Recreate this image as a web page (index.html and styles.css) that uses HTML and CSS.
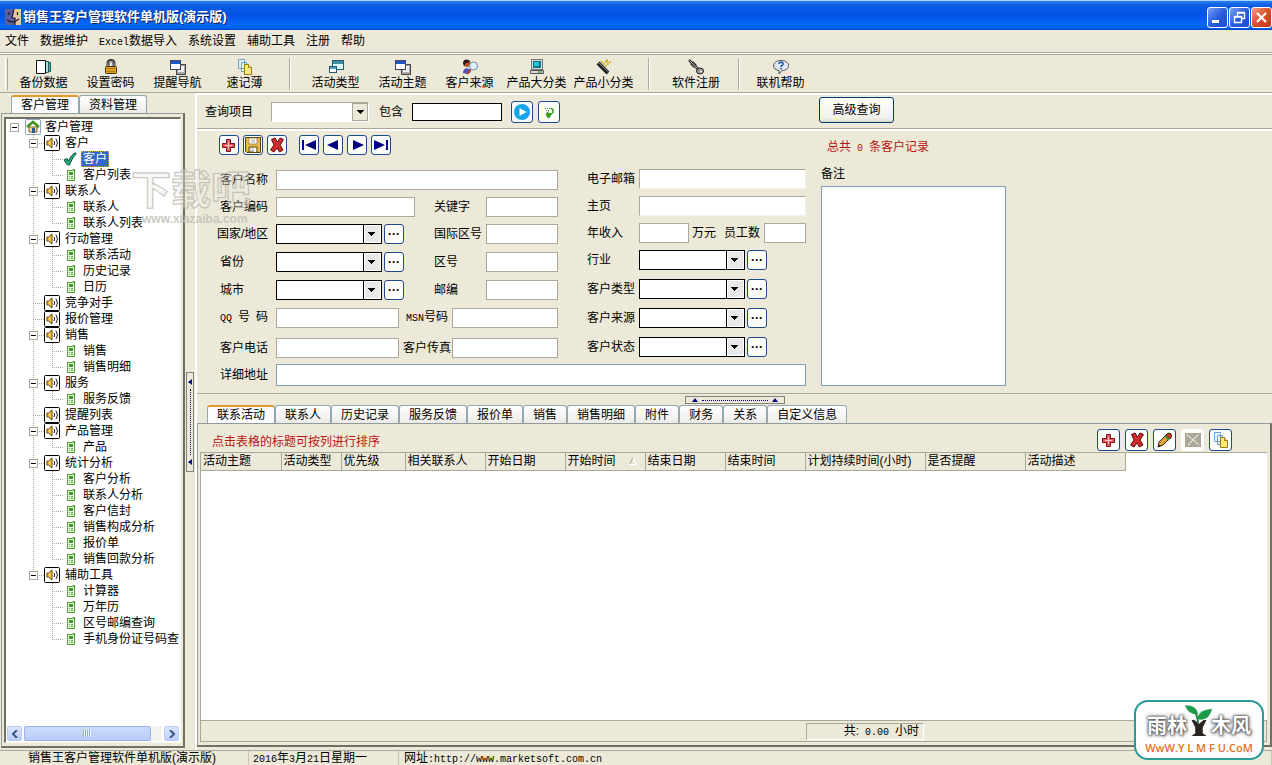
FILE: index.html
```html
<!DOCTYPE html>
<html lang="zh-CN">
<head>
    <meta charset="UTF-8">
    <meta name="viewport" content="width=device-width, initial-scale=1.0">
    <title>销售王客户管理软件单机版(演示版)</title>
    <link rel="stylesheet" href="styles.css">
</head>
<body>
    <!-- 图标定义 -->
    <svg class="defs" width="0" height="0" aria-hidden="true">
        <symbol id="i-backup" viewBox="0 0 16 16">
            <path d="M10.500 3.500h4v9h-4z" fill="#4fb5b0" stroke="#145a5a"/>
            <path d="M8.500 2.500h4v11h-4z" fill="#9fe5e0" stroke="#245a5a"/>
            <path d="M.5 1.500h9v13h-9z" fill="#fff" stroke="#111"/>
        </symbol>
        <symbol id="i-lock" viewBox="0 0 16 16">
            <path d="M5 8V4.500C5 .5 11 .5 11 4.500V8" fill="none" stroke="#333" stroke-width="3"/>
            <path d="M5 8V4.500C5 1.500 11 1.500 11 4.500V8" fill="none" stroke="#bbb"/>
            <rect x="2.500" y="7.500" width="11" height="7" rx="1" fill="#e0a020" stroke="#4a3000"/>
            <path d="M4 9.500h8M4 12.500h8" stroke="#b57a10"/>
        </symbol>
        <symbol id="i-windows" viewBox="0 0 16 16">
            <rect x="6.500" y="5.500" width="9" height="10" fill="#aaa" stroke="#444"/>
            <rect x="8" y="7" width="6" height="6" fill="#eee"/>
            <rect x=".5" y="1.500" width="10" height="9" fill="#fff" stroke="#445"/>
            <path d="M1 2h9v3H1z" fill="#1c56c8"/>
        </symbol>
        <symbol id="i-type" viewBox="0 0 16 16">
            <rect x="4.500" y="1.500" width="11" height="9" fill="#dff" stroke="#245a6c"/>
            <path d="M5 2h10v3H5z" fill="#3b8ca8"/>
            <rect x="1.500" y="7.500" width="7" height="6" fill="#fff" stroke="#245a6c"/>
            <path d="M2 8h6v2H2z" fill="#4ba3cb"/>
        </symbol>
        <symbol id="i-notes" viewBox="0 0 16 16">
            <path d="M1.500.5h6v9h-6zM4.500 3.500h5v9h-5z" fill="#e9f4ff" stroke="#6d9fc5"/>
            <path d="M7.500 5.500h4l3 3v7h-7z" fill="#ffe680" stroke="#9a7a14"/>
            <path d="M11.500 5.500v3h3" fill="#fff6c8" stroke="#9a7a14"/>
        </symbol>
        <symbol id="i-source" viewBox="0 0 16 16">
            <path d="M1 14c0-6 7-6 8-1l-3 2z" fill="#4a50c0"/>
            <circle cx="5" cy="4.500" r="3.500" fill="#b5562c"/>
            <path d="M1 4c0-5 7-4 7-1L4 4l-2 3z" fill="#2b1a14"/>
            <path d="m9 10-4 5" stroke="#c0392b" stroke-width="2"/>
            <circle cx="11.500" cy="7" r="4" fill="#dff3ff" stroke="#6a8ea8"/>
        </symbol>
        <symbol id="i-pc" viewBox="0 0 16 16">
            <rect x="2.500" y=".5" width="11" height="10" fill="#d8d8d8" stroke="#777"/>
            <path d="M4 2h8v7H4z" fill="#067a8a"/>
            <path d="M5 3h5v4H5z" fill="#27c4d4"/>
            <path d="M1.500 11.500h13v3h-13z" fill="#d8d8d8" stroke="#555"/>
            <path d="M9 13h4" stroke="#1b8a3a"/>
        </symbol>
        <symbol id="i-wand" viewBox="0 0 16 16">
            <path d="m2 4 10 10" stroke="#222" stroke-width="4"/>
            <path d="m2.500 3.500 10 9.500" stroke="#888"/>
            <path d="m5 2 3 3 3-4 1 4 3-3M9 7l3-1" fill="none" stroke="#c3a800" stroke-width="1.500" stroke-dasharray="2 1"/>
        </symbol>
        <symbol id="i-key" viewBox="0 0 16 16">
            <path d="m1 1 9 9M3 6l3-3M5 8l3-3" stroke="#333" stroke-width="2.500"/>
            <path d="m1.500 1.500 8 8" stroke="#bbb"/>
            <ellipse cx="12" cy="12" rx="3.500" ry="3" fill="#999" stroke="#222"/>
            <circle cx="13" cy="12.500" r="1" fill="#fff"/>
        </symbol>
        <symbol id="i-help" viewBox="0 0 16 16">
            <path d="M8 1.500c10 0 10 10 1 10L6 15v-3.500c-8-1-7-10 2-10z" fill="#dfe8f2" stroke="#555"/>
            <path d="M6 5c0-3 5-2 4 .5C9.500 6.500 8 6.500 8 8M8 9v1.500" fill="none" stroke="#1d58a8" stroke-width="1.600"/>
        </symbol>
        <symbol id="i-home" viewBox="0 0 16 16">
            <rect x=".5" y=".5" width="15" height="15" rx="1" fill="#fff" stroke="#8aa6c0"/>
            <path d="M4 8h8v5H4z" fill="#f0d890" stroke="#806020"/>
            <path d="m2 8 6-5 6 5" fill="none" stroke="#3f8f1e" stroke-width="2.500"/>
            <path d="M7 9h3v5H7z" fill="#2b57a0"/>
        </symbol>
        <symbol id="i-speaker" viewBox="0 0 16 16">
            <rect x=".5" y=".5" width="15" height="15" rx="1" fill="#fff" stroke="#000"/>
            <path d="M3 6v4h1.500L8 13V3L4.500 6z" fill="#f2c84b" stroke="#5a4208"/>
            <path d="M10 6q1.500 2 0 4M12 4q3 4 0 8" fill="none" stroke="#222"/>
        </symbol>
        <symbol id="i-phone" viewBox="0 0 10 12">
            <path d="M7 0h2v2H7z" fill="#4aa82e"/>
            <rect x="1.500" y="1.500" width="7" height="10" fill="#f2fbee" stroke="#4aa82e"/>
            <path d="M3 3h4v3H3z" fill="#3f9a28"/>
            <path d="M3 7h1v1H3zM5 7h2v1H5zM3 9h1v1H3zM5 9h2v1H5z" fill="#4aa82e"/>
        </symbol>
        <symbol id="i-check" viewBox="0 0 14 14">
            <path d="m1 8 3-1.500L5.500 9C7 5 9.500 2 12.500.7l.7 1.300C10 5 8 9 6.500 13h-2z" fill="#1fae7c" stroke="#085238"/>
        </symbol>
        <symbol id="i-add" viewBox="0 0 16 16">
            <path d="M5.500 2.500h4v4h4v4h-4v4h-4v-4h-4v-4h4z" fill="#e8555a" stroke="#7a1418"/>
            <path d="M7.500 5v7M4 8.500h7" stroke="#ffc6c6"/>
        </symbol>
        <symbol id="i-save" viewBox="0 0 16 16">
            <path d="M.5.5h15v15H2l-1.500-1.500z" fill="#e8b84c" stroke="#5a4010"/>
            <path d="M4 1h8v6H4z" fill="#fff" stroke="#8a6a20" stroke-width=".6"/>
            <path d="M4 10h8v5H4z" fill="#d8d8d8" stroke="#6a5010"/>
            <path d="M9 11h2v4H9z" fill="#fff"/>
            <path d="M6 3h4M6 5h4" stroke="#aaa"/>
        </symbol>
        <symbol id="i-delete" viewBox="0 0 16 16">
            <path d="M2.500 2.500 6 1l2.500 4L11 1l3.500 1.500L11 8l3 5-3.500 2L8 11l-3 4-3.500-2L5 8z" fill="#d42a2a" stroke="#5e0a0a"/>
        </symbol>
        <symbol id="i-first" viewBox="0 0 16 16"><path d="M1 3h2v10H1zM15 3v10L4 8z" fill="#000080"/></symbol>
        <symbol id="i-prev" viewBox="0 0 16 16"><path d="M13 3v10L2 8z" fill="#000080"/></symbol>
        <symbol id="i-next" viewBox="0 0 16 16"><path d="M4 3v10l11-5z" fill="#000080"/></symbol>
        <symbol id="i-last" viewBox="0 0 16 16"><path d="M1 3v10l11-5zM13 3h2v10h-2z" fill="#000080"/></symbol>
        <symbol id="i-go" viewBox="0 0 16 16">
            <circle cx="8" cy="8" r="8" fill="#13a5e8"/>
            <path d="M5.500 4v8l7-4z" fill="#fff"/>
        </symbol>
        <symbol id="i-refresh" viewBox="0 0 16 16">
            <path d="M4 4.500h1m1 0h1M5 6.500h1m1 0h1M6 4.500h3" stroke="#2f8f2f" stroke-dasharray="1 1"/>
            <path d="M9.500 4.500c3 0 3 3 2 5" fill="none" stroke="#3b9a1d" stroke-width="1.500"/>
            <path d="m4.500 10 3-3v2h4l-3 5h-2z" fill="#3b9a1d"/>
        </symbol>
        <symbol id="i-edit" viewBox="0 0 16 16">
            <path d="m1 15 1-5 8.500-8.500q4-1 4 3L6 13z" fill="#f0b23c" stroke="#3c2808"/>
            <path d="m3 11 8-8M5 12.500l8-8" stroke="#9a6410" stroke-dasharray="1 1"/>
            <path d="m9 3 4 4 1.500-2.500q0-4-4-3z" fill="#d0392b" stroke="#3c2808"/>
            <path d="m8.500 4 3.500 4" stroke="#4c9048" stroke-width="2"/>
            <path d="m1 15 .6-3L4 14z" fill="#222"/>
        </symbol>
        <symbol id="i-disabled" viewBox="0 0 16 16">
            <path d="M0 1h16v14H0z" fill="#aaa896"/>
            <path d="m2 3 12 10M13 3 3 13" stroke="#eeecdf" stroke-width="1.500" stroke-dasharray="2 1"/>
        </symbol>
    </svg>

    <!-- 标题栏 -->
    <header class="titlebar">
        <svg class="app-icon" viewBox="0 0 16 16" aria-hidden="true">
            <path d="M0 0h16v16H0z" fill="#5d5f9c"/>
            <path d="M9 0h7v16h-6V9H7z" fill="#e8c9a6"/>
            <path d="M9 0 7 9h3v7M4 3v3M12.500 3v3M2 11q6 4 12-1" fill="none" stroke="#1e1a30" stroke-width="1.200"/>
        </svg>
        <h1>销售王客户管理软件单机版(演示版)</h1>
        <div class="window-buttons">
            <button aria-label="最小化"><svg viewBox="0 0 19 19"><path d="M4 12h7v3H4z" fill="#fff"/></svg></button>
            <button aria-label="还原"><svg viewBox="0 0 19 19"><path d="M7.500 8V4.500h7v6H12M7 5h8M4.500 8.500h7v6h-7zM4 9h8" fill="none" stroke="#fff" stroke-width="1.400"/></svg></button>
            <button class="close" aria-label="关闭"><svg viewBox="0 0 19 19"><path d="m5 5 9 9m0-9-9 9" stroke="#fff" stroke-width="2.200"/></svg></button>
        </div>
    </header>

    <!-- 菜单 -->
    <nav class="menubar">
        <a href="#">文件</a>
        <a href="#">数据维护</a>
        <a href="#"><span class="latin">Excel</span>数据导入</a>
        <a href="#">系统设置</a>
        <a href="#">辅助工具</a>
        <a href="#">注册</a>
        <a href="#">帮助</a>
    </nav>

    <!-- 工具栏 -->
    <div class="toolbar">
        <span class="grip"></span>
        <button class="tool"><svg><use href="#i-backup"/></svg>备份数据</button>
        <button class="tool"><svg><use href="#i-lock"/></svg>设置密码</button>
        <button class="tool"><svg><use href="#i-windows"/></svg>提醒导航</button>
        <button class="tool"><svg><use href="#i-notes"/></svg>速记薄</button>
        <span class="sep"></span>
        <button class="tool"><svg><use href="#i-type"/></svg>活动类型</button>
        <button class="tool"><svg><use href="#i-windows"/></svg>活动主题</button>
        <button class="tool"><svg><use href="#i-source"/></svg>客户来源</button>
        <button class="tool"><svg><use href="#i-pc"/></svg>产品大分类</button>
        <button class="tool"><svg><use href="#i-wand"/></svg>产品小分类</button>
        <span class="sep"></span>
        <button class="tool tool-wide"><svg><use href="#i-key"/></svg>软件注册</button>
        <span class="sep sep-narrow"></span>
        <button class="tool"><svg><use href="#i-help"/></svg>联机帮助</button>
    </div>

    <div class="main">
        <!-- 左侧导航树 -->
        <aside class="sidebar">
            <div class="tabs side-tabs">
                <button class="tab active">客户管理</button>
                <button class="tab">资料管理</button>
            </div>
            <div class="side-page">
                <div class="tree-box">
                    <div class="tree">
                        <div class="node root"><button class="toggle" aria-label="折叠"></button><svg><use href="#i-home"/></svg><a href="#">客户管理</a></div>
                        <ul class="level2">
                            <li>
                                <div class="node"><button class="toggle" aria-label="折叠"></button><svg><use href="#i-speaker"/></svg><a href="#">客户</a></div>
                                <ul class="level3">
                                    <li><svg class="check"><use href="#i-check"/></svg><a href="#" class="selected">客户</a></li>
                                    <li><svg><use href="#i-phone"/></svg><a href="#">客户列表</a></li>
                                </ul>
                            </li>
                            <li>
                                <div class="node"><button class="toggle" aria-label="折叠"></button><svg><use href="#i-speaker"/></svg><a href="#">联系人</a></div>
                                <ul class="level3">
                                    <li><svg><use href="#i-phone"/></svg><a href="#">联系人</a></li>
                                    <li><svg><use href="#i-phone"/></svg><a href="#">联系人列表</a></li>
                                </ul>
                            </li>
                            <li>
                                <div class="node"><button class="toggle" aria-label="折叠"></button><svg><use href="#i-speaker"/></svg><a href="#">行动管理</a></div>
                                <ul class="level3">
                                    <li><svg><use href="#i-phone"/></svg><a href="#">联系活动</a></li>
                                    <li><svg><use href="#i-phone"/></svg><a href="#">历史记录</a></li>
                                    <li><svg><use href="#i-phone"/></svg><a href="#">日历</a></li>
                                </ul>
                            </li>
                            <li><div class="node"><span class="no-toggle"></span><svg><use href="#i-speaker"/></svg><a href="#">竞争对手</a></div></li>
                            <li><div class="node"><span class="no-toggle"></span><svg><use href="#i-speaker"/></svg><a href="#">报价管理</a></div></li>
                            <li>
                                <div class="node"><button class="toggle" aria-label="折叠"></button><svg><use href="#i-speaker"/></svg><a href="#">销售</a></div>
                                <ul class="level3">
                                    <li><svg><use href="#i-phone"/></svg><a href="#">销售</a></li>
                                    <li><svg><use href="#i-phone"/></svg><a href="#">销售明细</a></li>
                                </ul>
                            </li>
                            <li>
                                <div class="node"><button class="toggle" aria-label="折叠"></button><svg><use href="#i-speaker"/></svg><a href="#">服务</a></div>
                                <ul class="level3">
                                    <li><svg><use href="#i-phone"/></svg><a href="#">服务反馈</a></li>
                                </ul>
                            </li>
                            <li><div class="node"><span class="no-toggle"></span><svg><use href="#i-speaker"/></svg><a href="#">提醒列表</a></div></li>
                            <li>
                                <div class="node"><button class="toggle" aria-label="折叠"></button><svg><use href="#i-speaker"/></svg><a href="#">产品管理</a></div>
                                <ul class="level3">
                                    <li><svg><use href="#i-phone"/></svg><a href="#">产品</a></li>
                                </ul>
                            </li>
                            <li>
                                <div class="node"><button class="toggle" aria-label="折叠"></button><svg><use href="#i-speaker"/></svg><a href="#">统计分析</a></div>
                                <ul class="level3">
                                    <li><svg><use href="#i-phone"/></svg><a href="#">客户分析</a></li>
                                    <li><svg><use href="#i-phone"/></svg><a href="#">联系人分析</a></li>
                                    <li><svg><use href="#i-phone"/></svg><a href="#">客户信封</a></li>
                                    <li><svg><use href="#i-phone"/></svg><a href="#">销售构成分析</a></li>
                                    <li><svg><use href="#i-phone"/></svg><a href="#">报价单</a></li>
                                    <li><svg><use href="#i-phone"/></svg><a href="#">销售回款分析</a></li>
                                </ul>
                            </li>
                            <li>
                                <div class="node"><button class="toggle" aria-label="折叠"></button><svg><use href="#i-speaker"/></svg><a href="#">辅助工具</a></div>
                                <ul class="level3">
                                    <li><svg><use href="#i-phone"/></svg><a href="#">计算器</a></li>
                                    <li><svg><use href="#i-phone"/></svg><a href="#">万年历</a></li>
                                    <li><svg><use href="#i-phone"/></svg><a href="#">区号邮编查询</a></li>
                                    <li><svg><use href="#i-phone"/></svg><a href="#">手机身份证号码查</a></li>
                                </ul>
                            </li>
                        </ul>
                    </div>
                    <div class="scrollbar">
                        <button aria-label="向左滚动"><svg viewBox="0 0 8 8"><path d="M6 0 2 4l4 4" fill="none" stroke="#3c5488" stroke-width="2"/></svg></button>
                        <div class="track"><div class="thumb"></div></div>
                        <button aria-label="向右滚动"><svg viewBox="0 0 8 8"><path d="m2 0 4 4-4 4" fill="none" stroke="#3c5488" stroke-width="2"/></svg></button>
                    </div>
                </div>
            </div>
        </aside>

        <div class="splitter">
            <div class="handle handle-v">
                <svg viewBox="0 0 4 6"><path d="M4 0v6L0 3z" fill="#000080"/></svg>
                <i></i>
                <svg viewBox="0 0 4 6"><path d="M4 0v6L0 3z" fill="#000080"/></svg>
            </div>
        </div>

        <main class="content">
            <!-- 查询条件 -->
            <div class="query-bar">
                <label for="queryItem">查询项目</label>
                <select id="queryItem" class="query-select"></select>
                <label for="queryText">包含</label>
                <input type="text" id="queryText" class="query-text">
                <button class="icon-btn query-btn" aria-label="查询"><svg><use href="#i-go"/></svg></button>
                <button class="icon-btn query-btn" aria-label="刷新"><svg><use href="#i-refresh"/></svg></button>
                <button class="advanced">高级查询</button>
            </div>

            <!-- 客户资料 -->
            <form class="customer">
                <div class="customer-main">
                    <div class="record-nav">
                        <button type="button" class="icon-btn" aria-label="新增"><svg><use href="#i-add"/></svg></button>
                        <button type="button" class="icon-btn" aria-label="保存"><svg><use href="#i-save"/></svg></button>
                        <button type="button" class="icon-btn" aria-label="删除"><svg><use href="#i-delete"/></svg></button>
                        <span class="nav-gap"></span>
                        <button type="button" class="icon-btn" aria-label="首条"><svg><use href="#i-first"/></svg></button>
                        <button type="button" class="icon-btn" aria-label="上一条"><svg><use href="#i-prev"/></svg></button>
                        <button type="button" class="icon-btn" aria-label="下一条"><svg><use href="#i-next"/></svg></button>
                        <button type="button" class="icon-btn" aria-label="末条"><svg><use href="#i-last"/></svg></button>
                    </div>
                    <div class="fields">
                        <div class="fields-left">
                            <div class="row"><label for="name">客户名称</label><input type="text" id="name" class="grow"></div>
                            <div class="row tight"><label for="code">客户编码</label><input type="text" id="code" class="w-code"><label for="keyword" class="second">关键字</label><input type="text" id="keyword" class="w-short"></div>
                            <div class="row tight"><label for="country" class="wide-label">国家/地区</label><select id="country"></select><button type="button" class="more" aria-label="选择国家">···</button><label for="intlCode" class="second">国际区号</label><input type="text" id="intlCode" class="w-short"></div>
                            <div class="row"><label for="province">省份</label><select id="province"></select><button type="button" class="more" aria-label="选择省份">···</button><label for="areaCode" class="second">区号</label><input type="text" id="areaCode" class="w-short"></div>
                            <div class="row"><label for="city">城市</label><select id="city"></select><button type="button" class="more" aria-label="选择城市">···</button><label for="zip" class="second">邮编</label><input type="text" id="zip" class="w-short"></div>
                            <div class="row"><label for="qq"><span class="latin">QQ </span>号<span class="latin"> </span>码</label><input type="text" id="qq" class="w-phone"><label for="msn" class="third"><span class="latin">MSN</span>号码</label><input type="text" id="msn" class="grow"></div>
                            <div class="row loose"><label for="tel">客户电话</label><input type="text" id="tel" class="w-phone"><label for="fax" class="third">客户传真</label><input type="text" id="fax" class="grow"></div>
                        </div>
                        <div class="fields-right">
                            <div class="row"><label for="email">电子邮箱</label><input type="text" id="email" class="grow sunken"></div>
                            <div class="row tight"><label for="homepage">主页</label><input type="text" id="homepage" class="grow sunken"></div>
                            <div class="row tight"><label for="income">年收入</label><input type="text" id="income" class="w-income"><span class="unit">万元</span><label for="staff" class="staff">员工数</label><input type="text" id="staff" class="grow"></div>
                            <div class="row tight"><label for="industry">行业</label><select id="industry"></select><button type="button" class="more" aria-label="选择行业">···</button></div>
                            <div class="row medium"><label for="type">客户类型</label><select id="type"></select><button type="button" class="more" aria-label="选择类型">···</button></div>
                            <div class="row medium"><label for="source">客户来源</label><select id="source"></select><button type="button" class="more" aria-label="选择来源">···</button></div>
                            <div class="row medium"><label for="status">客户状态</label><select id="status"></select><button type="button" class="more" aria-label="选择状态">···</button></div>
                        </div>
                    </div>
                    <div class="row address"><label for="address">详细地址</label><input type="text" id="address" class="grow focus-line"></div>
                </div>
                <div class="customer-side">
                    <p class="total-records">总共<span class="latin"> 0 </span>条客户记录</p>
                    <label for="memo">备注</label>
                    <textarea id="memo"></textarea>
                </div>
            </form>

            <div class="splitter-h">
                <div class="handle handle-h">
                    <svg viewBox="0 0 6 4"><path d="M0 4h6L3 0z" fill="#000080"/></svg>
                    <i></i>
                    <svg viewBox="0 0 6 4"><path d="M0 4h6L3 0z" fill="#000080"/></svg>
                </div>
            </div>

            <!-- 明细 -->
            <div class="tabs detail-tabs">
                <button class="tab active">联系活动</button>
                <button class="tab">联系人</button>
                <button class="tab">历史记录</button>
                <button class="tab">服务反馈</button>
                <button class="tab">报价单</button>
                <button class="tab">销售</button>
                <button class="tab">销售明细</button>
                <button class="tab">附件</button>
                <button class="tab">财务</button>
                <button class="tab">关系</button>
                <button class="tab">自定义信息</button>
            </div>
            <section class="detail">
                <div class="detail-bar">
                    <p>点击表格的标题可按列进行排序</p>
                    <div class="detail-buttons">
                        <button class="icon-btn" aria-label="新增"><svg><use href="#i-add"/></svg></button>
                        <button class="icon-btn" aria-label="删除"><svg><use href="#i-delete"/></svg></button>
                        <button class="icon-btn" aria-label="编辑"><svg><use href="#i-edit"/></svg></button>
                        <button class="icon-btn" aria-label="导出" disabled><svg><use href="#i-disabled"/></svg></button>
                        <button class="icon-btn" aria-label="复制"><svg><use href="#i-notes"/></svg></button>
                    </div>
                </div>
                <div class="grid">
                    <table>
                        <colgroup>
                            <col class="c80"><col class="c60"><col class="c64"><col class="c80"><col class="c80"><col class="c80">
                            <col class="c80"><col class="c80"><col class="c120"><col class="c100"><col class="c100">
                        </colgroup>
                        <thead>
                            <tr>
                                <th>活动主题</th>
                                <th>活动类型</th>
                                <th>优先级</th>
                                <th>相关联系人</th>
                                <th>开始日期</th>
                                <th><span class="sorted">开始时间<svg viewBox="0 0 8 8"><path d="M.5 7.500 4 .5" stroke="#aca899"/><path d="m4 .5 3.500 7h-7" fill="none" stroke="#fff"/></svg></span></th>
                                <th>结束日期</th>
                                <th>结束时间</th>
                                <th>计划持续时间(小时)</th>
                                <th>是否提醒</th>
                                <th>活动描述</th>
                            </tr>
                        </thead>
                        <tbody></tbody>
                    </table>
                </div>
                <div class="grid-footer"><span class="sum">共:<span class="latin"> 0.00 </span>小时</span></div>
            </section>
        </main>
    </div>

    <!-- 状态栏 -->
    <footer class="statusbar">
        <span class="status-name">销售王客户管理软件单机版(演示版)</span>
        <span class="status-date"><span class="latin">2016</span>年<span class="latin">3</span>月<span class="latin">21</span>日星期一</span>
        <span class="status-url">网址<span class="latin">:http://www.marketsoft.com.cn</span></span>
    </footer>

    <div class="watermark">
        <b>下载吧</b>
        <span>www.xiazaiba.com</span>
    </div>
    <div class="badge">
        <div class="badge-name">
            <span>雨林</span>
            <svg viewBox="0 0 30 36" aria-hidden="true">
                <path d="M10 17l5 4 5-4h3l-4 8v6l4 3H7l4-3v-6l-4-8z" fill="#2a2420"/>
                <path d="M14 20q-1-8-3-11" fill="none" stroke="#157c3c" stroke-width="2"/>
                <path d="M0 1q13 0 14 10Q3 11 0 1z" fill="#1f9b4c"/>
                <path d="M13 15q2-9 16-10-3 14-16 11z" fill="#1f9b4c"/>
            </svg>
            <span>木风</span>
        </div>
        <div class="badge-url">WwW.Y L M F U.CoM</div>
    </div>
</body>
</html>
```
FILE: styles.css
```css
* {
    box-sizing: border-box;
}
body {
    margin: 0;
    height: 100vh;
    display: flex;
    flex-direction: column;
    overflow: hidden;
    background-color: #ece9d8;
    color: #000;
    font-family: "Liberation Sans", "Noto Sans CJK SC", sans-serif;
    font-size: 12px;
    line-height: 16px;
}
button, input, select, textarea {
    font: inherit;
    color: inherit;
    margin: 0;
    padding: 0;
}
a {
    color: inherit;
    text-decoration: none;
}
p, h1, ul {
    margin: 0;
    padding: 0;
}
svg {
    display: block;
    flex: none;
}
label, button, th {
    white-space: nowrap;
}
.defs {
    position: absolute;
}
.latin {
    font-family: "Liberation Mono", monospace;
    font-size: 10px;
    white-space: pre;
}

/* 标题栏 */
.titlebar {
    flex: none;
    display: flex;
    align-items: center;
    height: 30px;
    padding: 3px 0 0 5px;
    border-top: 1px solid #a8d4f4;
    background: linear-gradient(#2a7ef0 0, #0a5be4 5px, #0054e3 14px, #0468fc 24px, #0062f4 27px, #0040b8 100%);
    color: #fff;
}
.app-icon {
    width: 16px;
    height: 16px;
}
.titlebar h1 {
    margin-left: 2px;
    font-size: 13px;
    font-weight: bold;
    text-shadow: 1px 1px 0 #0a246a;
}
.window-buttons {
    display: flex;
    gap: 1px;
    margin-left: auto;
}
.window-buttons button {
    width: 21px;
    height: 21px;
    border: 1px solid #fff;
    border-radius: 3px;
    background: linear-gradient(135deg, #7ba2f5, #2a5ce0 50%, #1c4bd0);
}
.window-buttons .close {
    background: linear-gradient(135deg, #f0a088, #d9502c 50%, #c03810);
}

/* 菜单和工具栏 */
.menubar {
    flex: none;
    display: flex;
    gap: 11px;
    height: 22px;
    padding: 3px 5px;
}
.toolbar {
    flex: none;
    display: flex;
    height: 41px;
    padding-top: 3px;
    border-top: 1px solid #aca899;
    border-bottom: 1px solid #aca899;
    box-shadow: inset 0 1px 0 #fff, inset 0 2px 0 #aca899;
}
.grip {
    width: 3px;
    margin: 2px 2px 2px 5px;
    border-left: 1px solid #fff;
    border-right: 1px solid #aca899;
}
.tool {
    width: 67px;
    padding-top: 3px;
    display: flex;
    flex-direction: column;
    align-items: center;
    border: none;
    background: none;
}
.tool-wide {
    width: 70px;
}
.tool svg {
    width: 16px;
    height: 16px;
}
.sep {
    width: 2px;
    margin: 2px 11px;
    border-left: 1px solid #aca899;
    border-right: 1px solid #fff;
}
.sep-narrow {
    margin: 2px 7px;
}

.main {
    flex: 1;
    min-height: 0;
    display: flex;
}

/* 选项卡 */
.tabs {
    flex: none;
    display: flex;
    align-items: flex-end;
}
.tab {
    height: 18px;
    padding: 0 9px;
    border: 1px solid #91a7b4;
    border-bottom: none;
    border-radius: 3px 3px 0 0;
    background: linear-gradient(#fff, #ecebe6);
    line-height: 16px;
}
.tab.active {
    height: 18px;
    border-top: 2px solid #e5972d;
    background: #fcfcfe;
}

/* 左侧导航 */
.sidebar {
    flex: none;
    display: flex;
    flex-direction: column;
    width: 185px;
}
.side-tabs {
    padding: 2px 0 0 11px;
}
.side-page {
    flex: 1;
    min-height: 0;
    display: flex;
    margin: 0 0 2px 1px;
    padding: 3px 2px 3px 2px;
    border: 1px solid #919b9c;
    border-right: 2px solid #716f64;
    border-bottom: 2px solid #716f64;
}
.tree-box {
    flex: 1;
    min-width: 0;
    display: flex;
    flex-direction: column;
    border: 1px solid #f8f7f2;
    border-top: 2px solid #716f64;
    border-left: 2px solid #716f64;
    background: #fff;
}
.tree {
    flex: 1;
    min-height: 0;
    overflow: hidden;
}
.tree ul {
    list-style: none;
}
.node {
    display: flex;
    align-items: center;
    gap: 6px;
    height: 16px;
    white-space: nowrap;
}
.node.root {
    gap: 5px;
    padding-left: 4px;
}
.node svg {
    width: 16px;
    height: 16px;
}
.root svg {
    margin-left: 1px;
}
.node a {
    margin-left: -1px;
}
.toggle {
    flex: none;
    width: 9px;
    height: 9px;
    border: 1px solid #aca899;
    background: linear-gradient(#000, #000) center / 5px 1px no-repeat #fff;
}
.no-toggle {
    width: 9px;
}
.level2 {
    padding-left: 23px;
}
.level2 > li {
    background:
        repeating-linear-gradient(#aca899 0 1px, transparent 1px 2px) 4px 0 / 1px 100% no-repeat,
        repeating-linear-gradient(90deg, #aca899 0 1px, transparent 1px 2px) 4px 8px / 11px 1px no-repeat;
}
.level2 > li:last-child {
    background-size: 1px 8px, 11px 1px;
}
.level3 {
    padding-left: 23px;
}
.level3 li {
    display: flex;
    align-items: center;
    gap: 5px;
    height: 16px;
    padding-left: 14px;
    white-space: nowrap;
    background:
        repeating-linear-gradient(#aca899 0 1px, transparent 1px 2px) 0 0 / 1px 100% no-repeat,
        repeating-linear-gradient(90deg, #aca899 0 1px, transparent 1px 2px) 0 8px / 11px 1px no-repeat;
}
.level3 li:last-child {
    background-size: 1px 8px, 11px 1px;
}
.level3 svg {
    width: 10px;
    height: 12px;
}
.level3 svg.check {
    width: 14px;
    height: 14px;
    margin: 0 -1px 0 -3px;
}
.level3 a {
    padding: 0 2px;
}
.level3 a.selected {
    background-color: #316ac5;
    color: #fff;
    outline: 1px dotted #d8a050;
    outline-offset: -1px;
}
.scrollbar {
    flex: none;
    display: flex;
    gap: 2px;
    height: 16px;
    padding: 0 1px 1px;
}
.scrollbar button {
    display: flex;
    align-items: center;
    justify-content: center;
    width: 15px;
    border: 1px solid #b8cbf6;
    border-radius: 2px;
    background: linear-gradient(#dbe6fe, #bccffb);
}
.scrollbar svg {
    width: 8px;
    height: 8px;
}
.track {
    flex: 1;
    background-color: #f4f3ee;
}
.thumb {
    width: 92%;
    height: 100%;
    border: 1px solid #98b4ea;
    border-radius: 2px;
    background:
        repeating-linear-gradient(90deg, #8ca8e6 0 1px, #eef4fe 1px 2px) center / 8px 7px no-repeat,
        linear-gradient(#cbdbfe, #b8ccf8);
}

/* 分隔条 */
.splitter {
    flex: none;
    display: flex;
    align-items: center;
    justify-content: center;
    width: 10px;
}
.handle {
    display: flex;
    align-items: center;
    justify-content: space-between;
    border: 1px solid #85837a;
}
.handle i {
    flex: 1;
}
.handle-v {
    flex-direction: column;
    width: 8px;
    height: 100px;
    padding: 6px 1px;
}
.handle-v svg {
    width: 4px;
    height: 6px;
}
.handle-v i {
    margin: 4px 0;
    border-left: 1px dotted #000080;
}
.splitter-h {
    flex: none;
    display: flex;
    justify-content: center;
    height: 10px;
    padding-top: 2px;
}
.handle-h {
    width: 100px;
    height: 8px;
    padding: 0 6px;
}
.handle-h svg {
    width: 6px;
    height: 4px;
}
.handle-h i {
    margin: 0 4px;
    border-top: 1px dotted #000080;
}

/* 右侧内容 */
.content {
    flex: 1;
    min-width: 0;
    display: flex;
    flex-direction: column;
    border-left: 2px solid #fff;
}
.query-bar {
    flex: none;
    display: flex;
    align-items: center;
    height: 36px;
    padding: 0 8px;
    border-top: 2px solid #fff;
    border-bottom: 1px solid #aca899;
}
.query-bar label {
    margin-right: 9px;
}
select {
    flex: none;
    width: 106px;
    height: 20px;
    appearance: none;
    border: 1px solid #000;
    border-radius: 0;
    background:
        linear-gradient(#000, #000) right 9px top 10px / 1px 1px no-repeat,
        linear-gradient(#000, #000) right 8px top 9px / 3px 1px no-repeat,
        linear-gradient(#000, #000) right 7px top 8px / 5px 1px no-repeat,
        linear-gradient(#000, #000) right 6px top 7px / 7px 1px no-repeat,
        linear-gradient(#000, #000) right 17px center / 1px 100% no-repeat,
        linear-gradient(#e8e8e8, #e8e8e8) right 1px center / 15px 16px no-repeat,
        #fff;
}
.query-bar label:first-child {
    margin-right: 18px;
}
.query-bar .query-select {
    width: 98px;
    margin-right: 10px;
    border-color: #aca899 #fff #fff #aca899;
    background:
        linear-gradient(#000, #000) right 7px top 10px / 1px 1px no-repeat,
        linear-gradient(#000, #000) right 6px top 9px / 3px 1px no-repeat,
        linear-gradient(#000, #000) right 5px top 8px / 5px 1px no-repeat,
        linear-gradient(#000, #000) right 4px top 7px / 7px 1px no-repeat,
        linear-gradient(#ece9d8, #ece9d8) right 1px center / 14px 16px no-repeat,
        linear-gradient(#aca899, #aca899) right center / 16px 18px no-repeat,
        #fff;
}
.query-bar .query-text {
    width: 90px;
    height: 18px;
    margin-right: 9px;
    border-color: #000;
}
.icon-btn {
    flex: none;
    display: flex;
    align-items: center;
    justify-content: center;
    width: 20px;
    height: 20px;
    border: 1px solid #1c4a8a;
    border-radius: 3px;
    background: #fdfdfb;
}
.icon-btn svg {
    width: 16px;
    height: 16px;
}
.query-btn {
    width: 22px;
    height: 22px;
    margin-right: 5px;
}
.advanced {
    width: 75px;
    height: 26px;
    margin: 0 0 4px 254px;
    border: 1px solid #003c74;
    border-radius: 3px;
    background: linear-gradient(#fff, #f0efe8 85%, #dcd8cc);
}

/* 客户表单 */
.customer {
    flex: none;
    display: flex;
    gap: 15px;
    padding: 4px 19px 7px;
    border-top: 2px solid #fff;
    border-bottom: 1px solid #aca899;
}
.customer-main {
    flex: none;
    width: 590px;
}
.record-nav {
    display: flex;
    gap: 4px;
    padding-left: 3px;
}
.nav-gap {
    width: 4px;
}
.fields {
    display: flex;
    gap: 28px;
    padding-top: 14px;
}
.fields-left {
    flex: none;
    width: 342px;
    padding-top: 1px;
}
.fields-right {
    flex: 1;
    min-width: 0;
}
.row {
    display: flex;
    align-items: center;
    margin-top: 8px;
}
.row:first-child {
    margin-top: 0;
}
.row.tight {
    margin-top: 7px;
}
.row.medium {
    margin-top: 9px;
}
.row.loose {
    margin-top: 10px;
}
.row.address {
    margin-top: 6px;
}
.row label:first-child {
    flex: none;
    width: 60px;
    padding-left: 4px;
}
.row label.wide-label {
    padding-left: 1px;
}
.fields-right .row label:first-child {
    width: 53px;
    padding-left: 1px;
}
.row label.second {
    width: 52px;
    margin-left: auto;
}
.row label.third {
    width: 53px;
    padding-left: 3px;
    text-align: center;
}
input {
    min-width: 0;
    height: 20px;
    border: 1px solid #aca899;
    border-radius: 0;
    background: #fff;
}
.grow {
    flex: 1;
}
.sunken {
    border-color: #aca899 #f4f2e8 #f4f2e8 #aca899;
}
.focus-line {
    height: 22px;
    border-color: #7f9db9;
}
.w-code {
    width: 139px;
}
.w-short {
    width: 72px;
}
.w-phone {
    width: 123px;
}
.w-income {
    width: 50px;
}
.unit {
    flex: none;
    margin-left: 3px;
}
.row label.staff {
    margin: 0 4px 0 8px;
}
.more {
    width: 20px;
    height: 20px;
    margin-left: 2px;
    border: 1px solid #1c4a8a;
    border-radius: 3px;
    background: #fdfdfb;
    font-weight: bold;
    line-height: 16px;
}
.customer-side {
    display: flex;
    flex-direction: column;
    width: 185px;
    padding-top: 4px;
}
.total-records {
    margin-bottom: 9px;
    padding-left: 6px;
    color: #b81414;
}
.customer-side textarea {
    flex: 1;
    margin-top: 4px;
    border: 1px solid #7f9db9;
    background: #fff;
    resize: none;
}

/* 明细 */
.detail-tabs {
    height: 19px;
    padding-left: 10px;
}
.detail {
    flex: 1;
    min-height: 0;
    display: flex;
    flex-direction: column;
    margin-bottom: 3px;
    padding: 0 3px 3px 2px;
    border: 1px solid #919b9c;
    border-bottom: 2px solid #716f64;
    border-right: 2px solid #716f64;
}
.detail-bar {
    flex: none;
    display: flex;
    align-items: center;
    justify-content: space-between;
    height: 28px;
    padding: 4px 35px 0 12px;
    color: #b81414;
}
.detail-bar p {
    padding-top: 3px;
}
.detail-buttons {
    display: flex;
    gap: 5px;
}
.detail-buttons .icon-btn {
    width: 23px;
    height: 22px;
}
.icon-btn:disabled {
    border-color: #fff;
}
.grid {
    flex: 1;
    min-height: 0;
    border-top: 1px solid #aca899;
    border-left: 1px solid #aca899;
    background: #fff;
}
table {
    table-layout: fixed;
    width: 924px;
    border-collapse: collapse;
}
.c60 {
    width: 60px;
}
.c64 {
    width: 64px;
}
.c80 {
    width: 80px;
}
.c100 {
    width: 100px;
}
.c120 {
    width: 120px;
}
th {
    height: 17px;
    padding: 0 0 0 2px;
    border-right: 1px solid #aca899;
    border-bottom: 1px solid #aca899;
    background-color: #ece9d8;
    font-weight: normal;
    line-height: 16px;
    text-align: left;
}
.sorted {
    display: flex;
    align-items: center;
    justify-content: space-between;
    padding-right: 8px;
}
.sorted svg {
    width: 8px;
    height: 8px;
}
.grid-footer {
    flex: none;
    height: 22px;
    padding: 2px 0 0 605px;
    border: 1px solid #aca899;
}
.sum {
    display: block;
    width: 118px;
    height: 17px;
    padding-right: 4px;
    border: 1px solid;
    border-color: #aca899 #fff #fff #aca899;
    text-align: right;
    line-height: 15px;
}

/* 状态栏 */
.statusbar {
    flex: none;
    display: flex;
    height: 15px;
    border-top: 1px solid #aca899;
    line-height: 14px;
    white-space: nowrap;
}
.statusbar > span {
    border-right: 1px solid #c8c4b0;
}
.status-name {
    width: 249px;
    padding-left: 28px;
}
.status-date {
    width: 150px;
    padding-left: 4px;
}
.status-url {
    flex: 1;
    padding-left: 5px;
}

/* 浮在窗口上的标志 */
.watermark {
    position: absolute;
    top: 167px;
    left: 131px;
    width: 122px;
    opacity: 0.8;
    color: rgba(240, 240, 236, 0.5);
    pointer-events: none;
}
.watermark b {
    display: block;
    font-size: 40px;
    line-height: 46px;
    -webkit-text-stroke: 1px #b4b2a8;
}
.watermark span {
    display: block;
    margin-left: 11px;
    font-size: 12px;
    font-weight: bold;
    line-height: 12px;
    color: #c0beb4;
}
.badge {
    position: absolute;
    right: 8px;
    bottom: 5px;
    width: 130px;
    height: 60px;
    border: 2px solid #2a9a98;
    border-radius: 14px;
    background: #fdfdfd;
    text-align: center;
}
.badge-name {
    display: flex;
    justify-content: center;
    height: 38px;
    color: #fff;
    font-size: 20px;
    font-weight: bold;
    line-height: 48px;
    text-shadow: 0 0 2px #555, 0 0 2px #555, 0 0 4px #777, 1px 1px 3px #777;
}
.badge-name svg {
    width: 28px;
    height: 36px;
    margin: 1px -2px 0;
}
.badge-url {
    color: #e5702a;
    font-family: "Open Sans", sans-serif;
    font-size: 11px;
    font-weight: 600;
    line-height: 16px;
}
```
